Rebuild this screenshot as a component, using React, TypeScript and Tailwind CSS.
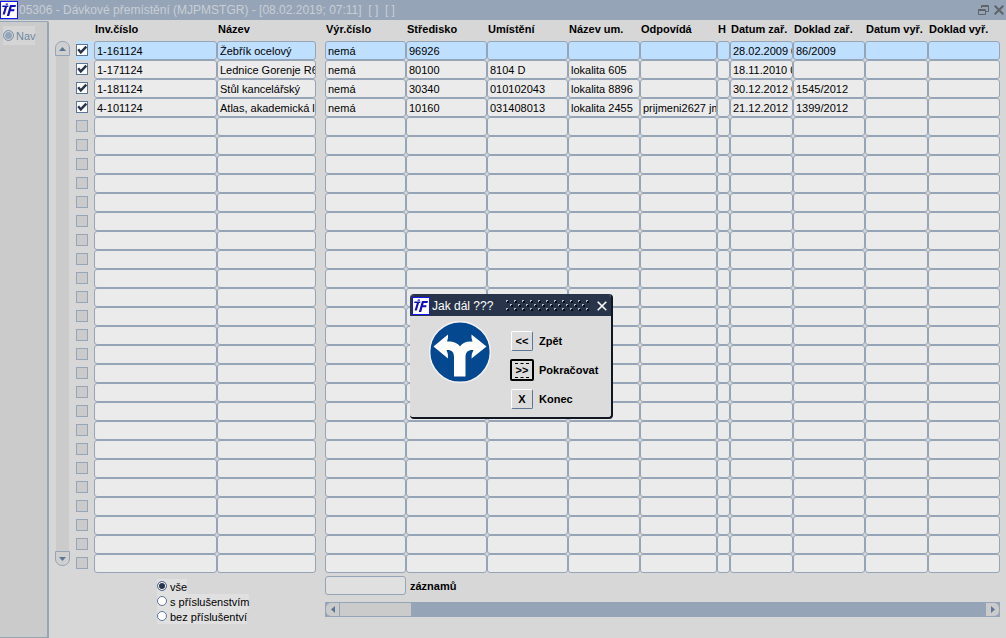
import { useState } from "react";

type Column = {
  key: string;
  label: string;
  gap?: boolean;
};

type Row = Record<string, string>;

const COLUMNS: Column[] = [
  { key: "inv", label: "Inv.číslo" },
  { key: "nazev", label: "Název" },
  { key: "gap", label: "", gap: true },
  { key: "vyr", label: "Výr.číslo" },
  { key: "stredisko", label: "Středisko" },
  { key: "umisteni", label: "Umístění" },
  { key: "nazevUm", label: "Název um." },
  { key: "odpovida", label: "Odpovídá" },
  { key: "h", label: "H" },
  { key: "datumZar", label: "Datum zař." },
  { key: "dokladZar", label: "Doklad zař." },
  { key: "datumVyr", label: "Datum vyř." },
  { key: "dokladVyr", label: "Doklad vyř." },
];

const ROWS: Row[] = [
  {
    inv: "1-161124",
    nazev: "Žebřík ocelový",
    vyr: "nemá",
    stredisko: "96926",
    datumZar: "28.02.2009 00:00",
    dokladZar: "86/2009",
  },
  {
    inv: "1-171124",
    nazev: "Lednice Gorenje R6",
    vyr: "nemá",
    stredisko: "80100",
    umisteni: "8104 D",
    nazevUm: "lokalita 605",
    datumZar: "18.11.2010 00:00",
  },
  {
    inv: "1-181124",
    nazev: "Stůl kancelářský",
    vyr: "nemá",
    stredisko: "30340",
    umisteni: "010102043",
    nazevUm: "lokalita 8896",
    datumZar: "30.12.2012 00:00",
    dokladZar: "1545/2012",
  },
  {
    inv: "4-101124",
    nazev: "Atlas, akademická li",
    vyr: "nemá",
    stredisko: "10160",
    umisteni: "031408013",
    nazevUm: "lokalita 2455",
    odpovida: "prijmeni2627 jm",
    datumZar: "21.12.2012",
    dokladZar: "1399/2012",
  },
];

const ROW_COUNT = 28;
const FILTERS = ["vše", "s příslušenstvím", "bez příslušentví"];

function Logo() {
  return (
    <svg viewBox="0 0 18 18" className="h-[18px] w-[18px] shrink-0" aria-hidden="true">
      <rect x="0.5" y="0.5" width="17" height="17" fill="#fff" stroke="#1414ff" />
      <g fill="#1010b8">
        <path d="M2.500 4.500H8.500L8.200 6H2.200Z" />
        <path d="M5.800 2.500H8L7.800 3.800H5.500Z" />
        <path d="M4.800 6H7L4.800 13.500H2.600Z" />
        <path d="M10 4H16L15.500 6H11.700L11.100 8.300H14.600L14.100 10.200H10.500L9.200 15H6.800Z" />
      </g>
    </svg>
  );
}

function TitleBar() {
  return (
    <header className="flex h-5 items-center bg-[#95a4b7] pr-[2px]">
      <Logo />
      <h1 className="ml-px flex-1 truncate text-[12px] leading-5 whitespace-pre text-[#c9ced5]">
        05306 - Dávkové přemístění (MJPMSTGR) - [08.02.2019; 07:11]  [ ]  [ ]
      </h1>
      <button aria-label="Obnovit" className="mr-[5px]">
        <svg viewBox="0 0 11 10" className="h-[10px] w-[11px]" fill="none" stroke="#5f6469">
          <path d="M3.500 3V0.500H10.500V6.500H8M3 1.500H11" />
          <path d="M0.500 4.500H7.500V9.500H0.500ZM0 5.500H8" />
        </svg>
      </button>
      <button aria-label="Zavřít">
        <svg viewBox="0 0 10 10" className="h-[10px] w-[10px]" stroke="#5f6469" strokeWidth="2">
          <path d="M0.7 0.7L9.3 9.3M9.3 0.7L0.7 9.3" />
        </svg>
      </button>
    </header>
  );
}

function SideBar() {
  return (
    <nav className="w-[49px] shrink-0 rounded-tr-[2px] border-t border-r-2 border-b border-[#95a4b7] bg-[#cbcbcb] pt-1 pl-[3px]">
      <button className="flex h-[19px] w-8 items-center gap-[2px] bg-[#d5d5d5] text-[11px] text-[#7187a0]">
        <svg viewBox="0 0 11 11" className="h-[11px] w-[11px] shrink-0">
          <circle cx="5.5" cy="5.5" r="4.9" fill="#d8dde3" stroke="#6f84a0" />
          <circle cx="5.5" cy="5.5" r="3.5" fill="#95a4b7" />
        </svg>
        <span className="pt-px">Nav</span>
      </button>
    </nav>
  );
}

function VerticalScroll() {
  return (
    <div className="mt-5 mb-[72px] flex w-[15px] shrink-0 flex-col items-center">
      <button
        aria-label="Nahoru"
        className="flex h-[15px] w-[15px] items-center justify-center rounded-t-[7px] border border-[#95a4b7] bg-[#cfcfcf]"
      >
        <svg viewBox="0 0 7 4" className="h-1 w-[7px]" fill="#5d7596">
          <path d="M3.5 0L7 4H0Z" />
        </svg>
      </button>
      <div className="w-[13px] flex-1 bg-[#cbcbcb]" />
      <button
        aria-label="Dolů"
        className="flex h-[15px] w-[15px] items-center justify-center rounded-b-[7px] border border-[#95a4b7] bg-[#cfcfcf]"
      >
        <svg viewBox="0 0 7 4" className="h-1 w-[7px]" fill="#5d7596">
          <path d="M0 0H7L3.5 4Z" />
        </svg>
      </button>
    </div>
  );
}

function RowCheck({ row }: { row: number }) {
  const filled = row < ROWS.length;
  return (
    <span className="relative block h-3 w-3">
      <input
        type="checkbox"
        aria-label={`Vybrat řádek ${row + 1}`}
        defaultChecked={filled}
        disabled={!filled}
        className="peer block h-3 w-3 appearance-none border border-[#5d7596] bg-white disabled:border-[#95a4b7] disabled:bg-[#cbcbcb]"
      />
      <svg
        viewBox="0 0 12 12"
        className="pointer-events-none absolute inset-0 hidden h-3 w-3 peer-checked:block"
        fill="none"
        stroke="#28344a"
        strokeWidth="2.4"
      >
        <path d="M2.2 5.2L4.8 8.4L10.3 2.6" />
      </svg>
    </span>
  );
}

function AssetTable() {
  return (
    <table className="w-full table-fixed border-separate border-spacing-0">
      <colgroup>
        <col className="w-[18px]" />
        <col className="w-[123px]" />
        <col className="w-[99px]" />
        <col className="w-[9px]" />
        <col className="w-[81px]" />
        <col className="w-[81px]" />
        <col className="w-[81px]" />
        <col className="w-[72px]" />
        <col className="w-[77px]" />
        <col className="w-[13px]" />
        <col className="w-[63px]" />
        <col className="w-[72px]" />
        <col className="w-[63px]" />
        <col className="w-[72px]" />
      </colgroup>
      <thead>
        <tr className="h-5 align-top">
          <td />
          {COLUMNS.map((col) => (
            <th
              key={col.key}
              className="p-0 pl-px text-left leading-4 font-bold whitespace-nowrap"
            >
              {col.label}
            </th>
          ))}
        </tr>
      </thead>
      <tbody>
        {Array.from({ length: ROW_COUNT }, (_, i) => (
          <tr key={i} className="group h-[19px]">
            <td className="border-r border-transparent bg-clip-padding p-0 pt-[3px] align-top group-first:bg-[#bfdfff]">
              <RowCheck row={i} />
            </td>
            {COLUMNS.map((col) =>
              col.gap ? (
                <td key={col.key} />
              ) : (
                <td key={col.key} className="p-0">
                  <input
                    type="text"
                    aria-label={`${col.label} ${i + 1}`}
                    defaultValue={ROWS[i]?.[col.key] ?? ""}
                    className="block h-[19px] w-full rounded-[3px] border border-[#95a4b7] bg-[#ebebeb] pl-[2px] group-first:bg-[#bfdfff]"
                  />
                </td>
              )
            )}
          </tr>
        ))}
      </tbody>
    </table>
  );
}

function Footer() {
  const [filter, setFilter] = useState(FILTERS[0]);

  return (
    <footer className="grid grid-cols-[249fr_675fr]">
      <div className="flex flex-col items-start pt-[6px] pl-[81px]">
        {FILTERS.map((name) => (
          <label key={name} className="flex h-[15px] items-center gap-[3px] bg-[#e0e0e0]">
            <input
              type="radio"
              name="filter"
              checked={filter === name}
              onChange={() => setFilter(name)}
              className="mb-px h-[10px] w-[10px] appearance-none rounded-full border border-[#5d7596] bg-white checked:bg-[#28344a] checked:shadow-[inset_0_0_0_1px_#fff]"
            />
            <span className="pt-px">{name}</span>
          </label>
        ))}
      </div>
      <div className="pt-[3px]">
        <label className="flex items-center gap-1 font-bold">
          <input
            type="text"
            className="h-[19px] w-[81px] rounded-[3px] border border-[#95a4b7] bg-[#e0e0e0] px-[2px] font-normal"
          />
          <span className="pt-px">záznamů</span>
        </label>
        <div className="mt-[7px] flex h-[15px] bg-[#95a4b7] p-px">
          <button
            aria-label="Doleva"
            className="flex w-[13px] items-center justify-center rounded-l-[5px] bg-[#cbcbcb]"
          >
            <svg viewBox="0 0 4 7" className="h-[7px] w-1" fill="#5d7596">
              <path d="M4 0V7L0 3.5Z" />
            </svg>
          </button>
          <div className="ml-px w-[71px] bg-[#cbcbcb]" />
          <button
            aria-label="Doprava"
            className="ml-auto flex w-[13px] items-center justify-center rounded-r-[5px] bg-[#cbcbcb]"
          >
            <svg viewBox="0 0 4 7" className="h-[7px] w-1" fill="#5d7596">
              <path d="M0 0V7L4 3.5Z" />
            </svg>
          </button>
        </div>
      </div>
    </footer>
  );
}

function DragDots() {
  return (
    <svg className="h-[11px] w-[83px]" aria-hidden="true" shapeRendering="crispEdges">
      <defs>
        <pattern id="dots" width="8" height="8" patternUnits="userSpaceOnUse">
          <path d="M1 1h2v2h-2zM5 5h2v2h-2z" fill="#05080d" />
          <path d="M0 0h2v1h-1v1h-1zM4 4h2v1h-1v1h-1z" fill="#a9b9c9" />
        </pattern>
      </defs>
      <rect width="83" height="11" fill="url(#dots)" />
    </svg>
  );
}

function ForkSign() {
  return (
    <svg viewBox="0 0 62 62" className="h-[62px] w-[62px]" role="img" aria-label="Rozcestí">
      <circle cx="31" cy="31" r="30.3" fill="#04488f" stroke="#f4f4f4" strokeWidth="1.4" />
      <path
        d="M4.500 25.500L19 13.500Q19.500 17.500 18 20.500C23 20 28.500 21.500 31 25.500C33.500 21.500 38 20 43.500 20.500Q42 17.500 42.500 13.500L57.500 25.500L42.500 37.500Q42 33 44.500 29C39.500 28.500 36.500 31 36.500 36V55.500H25V36C25 31 22.500 28.500 17.500 29Q19.500 33 19 37.500Z"
        fill="#fff"
      />
    </svg>
  );
}

const ACTIONS = [
  { sign: "<<", label: "Zpět" },
  { sign: ">>", label: "Pokračovat", focused: true },
  { sign: "X", label: "Konec" },
];

function NextStepDialog() {
  return (
    <div
      role="dialog"
      aria-label="Jak dál ???"
      className="absolute top-[294px] left-[410px] w-[203px] overflow-hidden rounded-[4px] border-t border-r-2 border-b-2 border-[#101722] border-t-[#28344a] bg-[#dcdcdc]"
    >
      <div className="flex h-[21px] items-center bg-[#28344a] px-[2px] text-white">
        <Logo />
        <h2 className="mr-2 ml-[2px] flex-1 pt-px text-[12px] whitespace-nowrap">Jak dál ???</h2>
        <DragDots />
        <button aria-label="Zavřít dialog" className="mr-[2px] ml-2">
          <svg viewBox="0 0 10 10" className="h-[10px] w-[10px]" stroke="#fff" strokeWidth="1.6">
            <path d="M0.7 0.7L9.3 9.3M9.3 0.7L0.7 9.3" />
          </svg>
        </button>
      </div>
      <div className="flex h-[101px] gap-[19px] pt-[5px] pl-[19px]">
        <ForkSign />
        <div className="flex flex-col gap-[7px] pt-[9px]">
          {ACTIONS.map(({ sign, label, focused }) => (
            <div key={label} className="flex h-[22px] items-center gap-[5px] font-bold">
              {focused ? (
                <button
                  id={label}
                  aria-labelledby={`${label}-text`}
                  className="flex h-[22px] w-6 items-center justify-center rounded-[2px] border-2 border-black bg-[#dcdcdc]"
                >
                  <span className="border-y border-dashed border-black px-px leading-[13px]">
                    {sign}
                  </span>
                </button>
              ) : (
                <button
                  id={label}
                  aria-labelledby={`${label}-text`}
                  className="mx-px h-5 w-[22px] rounded-[2px] border border-white border-r-[#5d7596] border-b-[#5d7596] bg-[#dcdcdc] leading-4"
                >
                  {sign}
                </button>
              )}
              <label id={`${label}-text`} htmlFor={label}>
                {label}
              </label>
            </div>
          ))}
        </div>
      </div>
    </div>
  );
}

export default function App() {
  return (
    <div className="relative flex min-h-screen flex-col bg-[#d7d7d7] font-['Liberation_Sans',Arial,sans-serif] text-[11px] leading-[15px] text-black">
      <TitleBar />
      <div className="flex flex-1 pt-px">
        <SideBar />
        <main className="flex flex-1 gap-[6px] pr-[6px] pl-[6px]">
          <VerticalScroll />
          <div className="min-w-0 flex-1">
            <AssetTable />
            <Footer />
          </div>
        </main>
      </div>
      <NextStepDialog />
    </div>
  );
}
